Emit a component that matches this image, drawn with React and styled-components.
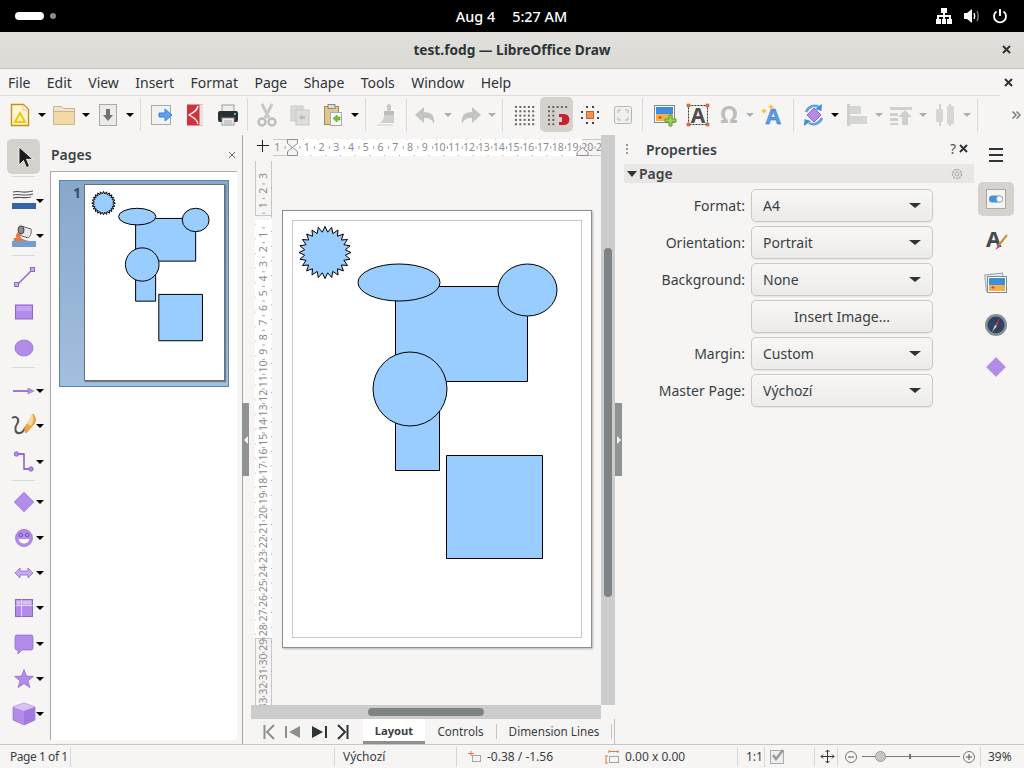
import React from 'react'
import styled, { createGlobalStyle } from 'styled-components'

const GlobalStyle = createGlobalStyle`
  html, body { margin: 0; padding: 0; width: 1024px; height: 768px; overflow: hidden; }
  body { font-family: "Noto Sans", "Open Sans", sans-serif; font-size: 14px; color: #2e3436; background: #f6f5f4; }
  * { box-sizing: border-box; }
`

const Screen = styled.div`
  width: 1024px;
  height: 768px;
  display: flex;
  flex-direction: column;
  background: #f6f5f4;
`

/* gnome top bar */
const TopBar = styled.div`
  height: 32px;
  background: #000;
  color: #fff;
  display: grid;
  grid-template-columns: 1fr auto 1fr;
  align-items: center;
  padding: 0 16px 0 15px;
  font-size: 14.4px;
  font-weight: 500;
`
const Workspaces = styled.div`
  display: flex;
  align-items: center;
  gap: 6px;
`
const Pill = styled.span`
  width: 29px;
  height: 8px;
  border-radius: 4px;
  background: #fff;
`
const Dot = styled.span`
  width: 6px;
  height: 6px;
  border-radius: 50%;
  background: #8a8a8a;
`
const Clock = styled.div`
  display: flex;
  gap: 17px;
`
const Tray = styled.div`
  display: flex;
  justify-content: flex-end;
  align-items: center;
  gap: 12px;
`
const Glyph = styled.svg`
  display: block;
  flex: none;
  overflow: ${p => (p.$clip ? 'hidden' : 'visible')};
  width: ${p => p.$w || 24}px;
  height: ${p => p.$h || p.$w || 24}px;
`

const TitleBar = styled.div`
  height: 37px;
  padding-bottom: 2px;
  background: linear-gradient(#e1dfdb, #dcdad5);
  border-bottom: 1px solid #c4bfb8;
  display: flex;
  align-items: center;
  justify-content: center;
  position: relative;
  font-weight: 700;
  font-size: 13.7px;
  color: #2e3436;
`
const CloseMark = styled.span`
  position: absolute;
  right: ${p => p.$right}px;
  top: ${p => p.$top}px;
  display: block;
`

const MenuBar = styled.div`
  height: 27px;
  margin-right: 24px;
  border-bottom: 1px solid #dedcd9;
  display: flex;
  align-items: center;
  padding-left: 8px;
  position: relative;
  gap: 16.4px;
  font-size: 14px;
  color: #2e3436;
`
const MenuItem = styled.span`
  display: block;
`

const ToolBar = styled.div`
  height: 39px;
  padding: 0 0 2px 3px;
  display: flex;
  align-items: center;
`
const ToolButton = styled.div`
  flex: none;
  width: ${p => p.$w || 33}px;
  height: 35px;
  display: flex;
  align-items: center;
  justify-content: center;
  border-radius: 5px;
  background: ${p => (p.$active ? '#d5d1cc' : 'transparent')};
`
const Caret = styled.span`
  flex: none;
  width: ${p => p.$w || 11}px;
  margin-left: ${p => p.$shift || 0}px;
  display: flex;
  justify-content: center;
  &::before {
    content: '';
    border-left: 4px solid transparent;
    border-right: 4px solid transparent;
    border-top: 4px solid ${p => (p.$dim ? '#b0aeab' : '#000')};
  }
`
const ToolSep = styled.span`
  flex: none;
  width: 1px;
  height: 33px;
  background: #dcdad6;
  margin: 0 ${p => p.$r}px 0 ${p => p.$l}px;
`
const More = styled.span`
  flex: none;
  margin-left: 34px;
`

const Main = styled.div`
  flex: 1;
  min-height: 0;
  display: grid;
  grid-template-columns: 50px 193px 8px 364px 7px 352px 50px;
`

/* left drawing tools */
const Rail = styled.div`
  display: flex;
  flex-direction: column;
  padding: 4px 0 0 7px;
`
const RailButton = styled.div`
  height: 35.3px;
  width: 43px;
  flex: none;
  display: flex;
  align-items: center;
`
const RailIcon = styled.div`
  width: 33px;
  height: 35px;
  flex: none;
  display: flex;
  align-items: center;
  justify-content: center;
  border-radius: 5px;
  background: ${p => (p.$active ? '#d5d1cc' : 'transparent')};
`
const RailSep = styled.span`
  display: block;
  flex: none;
  width: 23px;
  height: 1px;
  background: #dcdad6;
  margin: ${p => p.$t}px 0 ${p => p.$b}px 5px;
`

const PagesPanel = styled.div`
  display: flex;
  flex-direction: column;
  padding-bottom: 4px;
  border-right: 1px solid #a8a6a2;
`
const PanelHead = styled.div`
  height: 37px;
  flex: none;
  display: flex;
  align-items: center;
  justify-content: space-between;
  padding: 3px 1px 0 1px;
  margin-right: 5px;
  border-bottom: 1px solid #b0aeaa;
  font-weight: 600;
  font-size: 14px;
  color: #3d4245;
`
const PagesList = styled.div`
  flex: 1;
  margin-right: 5px;
  background: #fff;
  border-left: 1px solid #a8a6a2;
  border-radius: 0 0 4px 0;
  padding: 8px 0 0 8px;
`
const Thumb = styled.div`
  width: 170px;
  height: 207px;
  background: linear-gradient(#87a7cb, #a3bfde);
  border: 1px solid #5f82a8;
  display: flex;
  padding: 3px 0 0 5px;
  gap: 3px;
`
const ThumbNum = styled.span`
  width: 16px;
  text-align: right;
  font-weight: 700;
  font-size: 14px;
  color: #3c4a58;
  line-height: 17px;
`
const ThumbPage = styled.div`
  width: 141px;
  height: 197px;
  background: #fff;
  outline: 1px solid #6f6f6f;
  outline-offset: -1px;
  box-shadow: 1px 1px 1px #6b7f97;
`

const Splitter = styled.div`
  display: flex;
  flex-direction: column;
  justify-content: center;
  align-items: flex-start;
  margin-left: ${p => (p.$left ? -1 : 0)}px;
`
const SplitHandle = styled.div`
  width: 7px;
  height: 73px;
  background: #909393;
  display: flex;
  align-items: center;
  justify-content: center;
  &::before {
    content: '';
    border-top: 4px solid transparent;
    border-bottom: 4px solid transparent;
    ${p => (p.$left ? 'border-right: 4px solid #f6f5f4;' : 'border-left: 4px solid #f6f5f4;')}
  }
`

/* centre document area */
const Work = styled.div`
  display: grid;
  grid-template-columns: 350px 14px;
  grid-template-rows: 570px 14px 25px;
`
const Canvas = styled.div`
  display: grid;
  grid-template-columns: 22px 328px;
  grid-template-rows: 26px 544px;
  overflow: hidden;
`
const Corner = styled.div`
  padding: 5px 0 0 6px;
`
const HRuler = styled.div`
  padding-top: 4px;
`
const VRuler = styled.div`
  padding-left: 4px;
`
const PageWrap = styled.div`
  padding: 49px 0 0 9px;
`
const Sheet = styled.div`
  width: 310px;
  height: 438px;
  background: #fff;
  outline: 1px solid #8e8e8e;
  outline-offset: -1px;
  box-shadow: 1px 1px 2px #b5b3b0;
`
const DrawingSvg = styled.svg`
  display: block;
  width: 100%;
  height: 100%;
`
const VScroll = styled.div`
  background: #cccccc;
  padding: 113px 3px 0;
`
const VThumb = styled.div`
  width: 8px;
  height: 349px;
  border-radius: 4px;
  background: #808383;
`
const HScroll = styled.div`
  background: #cccccc;
  padding: 3px 0 0 117px;
`
const HThumb = styled.div`
  width: 116px;
  height: 8px;
  border-radius: 4px;
  background: #808383;
`
const Filler = styled.div``
const TabBar = styled.div`
  grid-column: 1 / 3;
  display: flex;
  align-items: stretch;
  padding-left: 12px;
  font-size: 11.7px;
  white-space: nowrap;
  border-right: 1px solid #c4c1bc;
`
const NavGroup = styled.div`
  display: flex;
  align-items: center;
  width: 100px;
  flex: none;
  gap: 10px;
`
const TabButton = styled.div`
  width: ${p => p.$w}px;
  flex: none;
  padding-top: 1px;
  display: flex;
  align-items: center;
  justify-content: center;
  background: ${p => (p.$active ? '#fff' : 'transparent')};
  border-bottom: 3px solid ${p => (p.$active ? '#8e9090' : 'transparent')};
  font-size: ${p => (p.$active ? 11.2 : 11.7)}px;
  font-weight: ${p => (p.$active ? 700 : 400)};
  color: #3a3f42;
`
const TabSep = styled.span`
  width: 1px;
  height: 15px;
  flex: none;
  align-self: center;
  background: #c9c6c2;
`

/* right properties deck */
const Props = styled.div`
  display: flex;
  flex-direction: column;
  padding-left: 2px;
`
const PropsHead = styled.div`
  height: 29px;
  flex: none;
  display: flex;
  align-items: center;
  padding-left: 22px;
  position: relative;
  font-weight: 600;
  font-size: 14px;
  color: #3d4245;
`
const Grip = styled.span`
  position: absolute;
  left: 2px;
  top: 9px;
  height: 12px;
  width: 2px;
  background: repeating-linear-gradient(#9a9a9a 0 2px, transparent 2px 4px);
`
const HeadTools = styled.span`
  position: absolute;
  right: 6px;
  top: 4px;
  display: flex;
  align-items: center;
  gap: 3px;
  font-weight: 400;
  color: #555;
`
const SectionHead = styled.div`
  height: 19px;
  flex: none;
  background: #e8e7e5;
  display: flex;
  align-items: center;
  padding: 0 11px 0 3px;
  gap: 2px;
  font-weight: 600;
  font-size: 14px;
  color: #3d4245;
  &::before {
    content: '';
    border-left: 5.5px solid transparent;
    border-right: 5.5px solid transparent;
    border-top: 6px solid #2e3436;
  }
`
const SectionName = styled.span`
  flex: 1;
`
const Form = styled.div`
  padding-top: 6px;
  display: flex;
  flex-direction: column;
  gap: 4px;
`
const Row = styled.div`
  display: flex;
  align-items: center;
  gap: 6px;
`
const Label = styled.span`
  width: 121px;
  text-align: right;
  font-size: 14px;
  color: #3a3f42;
`
const Combo = styled.div`
  width: 182px;
  height: 33px;
  border: 1px solid #cdc7c2;
  border-radius: 5px;
  background: linear-gradient(#f8f7f6, #edebe9);
  box-shadow: 0 1px 1px rgba(0, 0, 0, 0.07);
  display: flex;
  align-items: center;
  justify-content: ${p => (p.$center ? 'center' : 'space-between')};
  padding: 0 11px;
  font-size: 14px;
  color: #3a3f42;
`
const ComboArrow = styled.span`
  border-left: 6px solid transparent;
  border-right: 6px solid transparent;
  border-top: 5px solid #2e3436;
`

const Deck = styled.div`
  display: flex;
  flex-direction: column;
  align-items: flex-start;
  padding: 8px 0 0 4px;
`
const Burger = styled.div`
  width: 36px;
  height: 24px;
  margin-bottom: 15px;
  display: flex;
  flex-direction: column;
  align-items: center;
  justify-content: center;
  gap: 4px;
  & > span {
    display: block;
    width: 14px;
    height: 2px;
    background: #2e3436;
  }
`
const DeckTab = styled.div`
  width: 36px;
  height: 34px;
  margin-bottom: 8px;
  border-radius: 5px;
  display: flex;
  align-items: center;
  justify-content: center;
  background: ${p => (p.$active ? '#d5d1cc' : 'transparent')};
`

/* status bar */
const StatusBar = styled.div`
  height: 24px;
  flex: none;
  border-top: 1px solid #c8c5c0;
  display: flex;
  align-items: center;
  font-size: 12px;
  color: #3a3f42;
  white-space: nowrap;
`
const Cell = styled.div`
  flex: none;
  width: ${p => p.$w}px;
  height: 20px;
  padding-left: ${p => p.$pad || 0}px;
  display: flex;
  align-items: center;
  gap: ${p => p.$gap || 0}px;
  letter-spacing: ${p => (p.$tight ? '-0.45px' : 'normal')};
  border-right: ${p => (p.$plain ? 'none' : '1px solid #d9d7d3')};
`
const ZoomTrack = styled.div`
  width: 98px;
  height: 1px;
  background: #777;
  position: relative;
  margin: 0 3px 0 5px;
`
const ZoomKnob = styled.span`
  position: absolute;
  left: 13px;
  top: -5px;
  width: 11px;
  height: 11px;
  border-radius: 50%;
  background: #c9c7c3;
  border: 1px solid #999;
`
const ZoomTick = styled.span`
  position: absolute;
  left: 47px;
  top: -2px;
  width: 2px;
  height: 5px;
  background: #777;
`

const P = '#b38be8'
const PD = '#8f63d2'

const star = (cx, cy, ro, ri, n) => {
  const pts = []
  for (let i = 0; i < n * 2; i++) {
    const r = i % 2 ? ri : ro
    const a = (Math.PI * i) / n - Math.PI / 2
    pts.push(`${(cx + r * Math.cos(a)).toFixed(1)},${(cy + r * Math.sin(a)).toFixed(1)}`)
  }
  return pts.join(' ')
}

function Drawing({ margin, stroke }) {
  const shape = { fill: '#99ccff', stroke: '#000', strokeWidth: stroke, vectorEffect: 'non-scaling-stroke' }
  return (
    <DrawingSvg viewBox="282 210 310 438" preserveAspectRatio="none">
      {margin && <rect x="292.5" y="220.5" width="289" height="417" fill="none" stroke="#c8c8c8" />}
      <polygon points={star(325, 252.5, 26, 20.5, 24)} {...shape} />
      <rect x="395.5" y="286.5" width="132" height="95" {...shape} />
      <ellipse cx="399" cy="282.5" rx="41" ry="18.5" {...shape} />
      <ellipse cx="527.5" cy="290" rx="29.5" ry="26" {...shape} />
      <rect x="395.5" y="400.5" width="44" height="70" {...shape} />
      <circle cx="410" cy="389" r="37" {...shape} />
      <rect x="446.5" y="455.5" width="96" height="103" {...shape} />
    </DrawingSvg>
  )
}

function HorizontalRuler() {
  const zero = 292 - 273
  const cm = 14.76
  const items = []
  for (let i = -1; i <= 21; i++) {
    const x = zero + i * cm
    if (i !== 0) {
      items.push(<text key={i} x={x} y="12" fontSize="10.5" textAnchor="middle" fill="#8c8c8c">{Math.abs(i)}</text>)
    }
    items.push(<rect key={`t${i}`} x={x + cm / 2} y="7" width="1" height="3" fill="#aaa" />)
    items.push(<rect key={`q${i}`} x={x + cm / 4} y="16" width="1" height="1" fill="#aaa" />)
    items.push(<rect key={`r${i}`} x={x + (3 * cm) / 4} y="0" width="1" height="1" fill="#ccc" />)
  }
  return (
    <Glyph $clip $w={328} $h={17} viewBox="0 0 328 17" fontFamily="Noto Sans, sans-serif">
      <rect x={zero} width="290" height="17" fill="#fff" />
      <path d="M0 .5H19M0 16.5H19M309 .5H328M309 16.5H328" stroke="#c8c8c8" />
      {items}
      <path d="M14.5 .5h10v4l-5 4-5-4zM14.5 16.5h10v-4l-5-4-5 4z" fill="#f6f5f4" stroke="#8e8e8e" />
      <path d="M304 16.5h11v-3l-5.5-5-5.5 5z" fill="#f6f5f4" stroke="#8e8e8e" />
    </Glyph>
  )
}

function VerticalRuler() {
  const zero = 220 - 161
  const cm = 14.65
  const items = []
  for (let i = -3; i <= 33; i++) {
    const y = zero + i * cm
    if (i !== 0) {
      items.push(
        <text key={i} x="8.5" y={y} fontSize="10.5" textAnchor="middle" fill="#8c8c8c" transform={`rotate(-90 8.5 ${y}) translate(0 3.5)`}>
          {Math.abs(i)}
        </text>
      )
    }
    items.push(<rect key={`t${i}`} x="7" y={y + cm / 2} width="3" height="1" fill="#aaa" />)
    items.push(<rect key={`q${i}`} x="0" y={y + cm / 4} width="1" height="1" fill="#ccc" />)
    items.push(<rect key={`r${i}`} x="16" y={y + (3 * cm) / 4} width="1" height="1" fill="#aaa" />)
  }
  return (
    <Glyph $clip $w={17} $h={544} viewBox="0 0 17 544" fontFamily="Noto Sans, sans-serif">
      <rect y={zero} width="17" height="418" fill="#fff" />
      <path d="M.5 0V54M16.5 0V54M.5 477V544M16.5 477V544M0 54.5H17M0 477.5H17" stroke="#c8c8c8" fill="none" />
      {items}
    </Glyph>
  )
}

const Gray = '#c4c4c2'

const Ic = {
  New: () => (
    <Glyph viewBox="0 0 24 24">
      <path d="M3.5 1.5h12l5 5v16h-17z" fill="#fff6d0" stroke="#c98f1e" strokeWidth="1.4" />
      <path d="M15 2v5h5" fill="#fff" stroke="#e8c878" />
      <path d="M12 10l5 9H7z" fill="none" stroke="#f5c211" strokeWidth="2" />
    </Glyph>
  ),
  Folder: () => (
    <Glyph viewBox="0 0 24 24">
      <path d="M1.5 3.5h8l2 2h11v16h-21z" fill="#efe3cb" stroke="#c9b48c" />
      <path d="M1.5 8.5h21v13h-21z" fill="#f1d9a8" stroke="#c9b48c" />
    </Glyph>
  ),
  Save: () => (
    <Glyph viewBox="0 0 24 24">
      <rect x="3.5" y="1.5" width="17" height="21" fill="#ecebe9" stroke="#a9a9a7" />
      <path d="M10 6h4v6h3l-5 6-5-6h3z" fill="#6f7374" />
    </Glyph>
  ),
  Export: () => (
    <Glyph viewBox="0 0 24 24">
      <rect x="1.5" y="2.5" width="19" height="19" fill="#f2f2f1" stroke="#a9a9a7" />
      <path d="M9 10h6V6l7 6-7 6v-4H9z" fill="#62a0ea" stroke="#3584e4" />
    </Glyph>
  ),
  Pdf: () => (
    <Glyph viewBox="0 0 24 24">
      <rect x="4" y="1.5" width="16" height="21" fill="#d0343a" />
      <path d="M15 3c-1 5-5 7-9 9 4 2 8 4 9 9" fill="none" stroke="#fff" strokeWidth="1.3" />
      <rect x="16.5" y="1.5" width="3.5" height="21" fill="#e7e3e0" />
    </Glyph>
  ),
  Print: () => (
    <Glyph viewBox="0 0 24 24">
      <rect x="6" y="2" width="12" height="7" fill="#eeeeec" stroke="#999" />
      <rect x="2" y="8" width="20" height="11" rx="2" fill="#2b2f31" />
      <rect x="18" y="10" width="2" height="2" fill="#33c7de" />
      <rect x="6" y="15" width="12" height="7" fill="#eeeeec" stroke="#999" />
      <path d="M8 18h8M8 20h8" stroke="#aaa" />
    </Glyph>
  ),
  Cut: () => (
    <Glyph viewBox="0 0 24 24">
      <path d="M7 1l7 14M17 1l-7 14" stroke="#c8c8c6" strokeWidth="3" />
      <circle cx="7" cy="19" r="3.5" fill="none" stroke="#bdbdbb" strokeWidth="2.4" />
      <circle cx="17" cy="19" r="3.5" fill="none" stroke="#bdbdbb" strokeWidth="2.4" />
    </Glyph>
  ),
  Copy: () => (
    <Glyph viewBox="0 0 24 24">
      <rect x="3" y="3" width="12" height="15" fill="#d9d9d7" stroke="#ccc" />
      <rect x="8" y="7" width="13" height="15" fill="#dededc" stroke="#c8c8c6" />
      <path d="M11 14l3-3v2h3v3h-3v2z" fill="#bcbcba" />
    </Glyph>
  ),
  Paste: () => (
    <Glyph viewBox="0 0 24 24">
      <rect x="3.5" y="3.5" width="14" height="18" fill="#e0c68f" stroke="#a88a50" />
      <rect x="7" y="1.5" width="7" height="4" fill="#ddd" stroke="#888" />
      <rect x="9.5" y="9.5" width="11" height="13" fill="#f7f7f6" stroke="#aaa" />
      <path d="M16 12l-4 3.5 4 3.5v-2h3v-3h-3z" fill="#73c04b" stroke="#4e9a2a" strokeWidth=".6" />
    </Glyph>
  ),
  Brush: () => (
    <Glyph viewBox="0 0 24 24">
      <rect x="12" y="1" width="4" height="8" rx="2" fill="#c8c8c6" />
      <rect x="9" y="8" width="10" height="4" fill="#bdbdbb" />
      <path d="M9 12h10v8H4c3-1 5-3 5-8z" fill="#cfcfcd" />
      <path d="M2 22h16" stroke="#e2e2e0" strokeWidth="2" />
    </Glyph>
  ),
  Undo: () => (
    <Glyph viewBox="0 0 24 24">
      <path d="M10 4L1 12l9 8v-5c5 0 8 1 10 6 1-8-2-12-10-12z" fill={Gray} />
    </Glyph>
  ),
  Redo: () => (
    <Glyph viewBox="0 0 24 24">
      <path d="M14 4l9 8-9 8v-5c-5 0-8 1-10 6-1-8 2-12 10-12z" fill={Gray} />
    </Glyph>
  ),
  Grid: ({ magnet }) => {
    const dots = []
    for (let x = 0; x < 5; x++) {
      for (let y = 0; y < 5; y++) {
        if (!magnet || x < 2 || y < 1) dots.push(<rect key={`${x}${y}`} x={3 + x * 4.3} y={3 + y * 4.3} width="2" height="2" fill="#666" />)
      }
    }
    return (
      <Glyph viewBox="0 0 24 24">
        {dots}
        {magnet && <path d="M14 11h5a5.5 5.5 0 010 11h-5v-3h3v-5h-3z" fill="#c8202c" />}
      </Glyph>
    )
  },
  Help: () => (
    <Glyph viewBox="0 0 24 24">
      <path d="M8 4h2M14 4h2M8 20h2M14 20h2M4 8v2M4 14v2M20 8v2M20 14v2" stroke="#444" strokeWidth="2" />
      <rect x="8.5" y="8.5" width="7" height="7" fill="#f5924e" stroke="#c9622a" />
    </Glyph>
  ),
  Full: () => (
    <Glyph viewBox="0 0 24 24">
      <rect x="3.5" y="3.5" width="17" height="17" rx="2" fill="#f0f0ee" stroke="#b5b5b3" />
      <path d="M7 10V7h3M14 7h3v3M17 14v3h-3M10 17H7v-3" fill="none" stroke="#b5b5b3" />
    </Glyph>
  ),
  Image: () => (
    <Glyph viewBox="0 0 24 24">
      <rect x="1.5" y="2.5" width="20" height="17" fill="#fff" stroke="#7a8a96" />
      <rect x="3" y="4" width="17" height="7" fill="#3f8fd8" />
      <rect x="3" y="11" width="17" height="7" fill="#f5b043" />
      <path d="M7 13v3M5.5 14.5h3" stroke="#d33" />
      <path d="M16 12h3v4h4v3h-4v4h-3v-4h-4v-3h4z" fill="#9bd25f" stroke="#5f9e2e" />
    </Glyph>
  ),
  TextBox: () => (
    <Glyph viewBox="0 0 24 24" fontFamily="Noto Sans, sans-serif">
      <rect x="2.5" y="2.5" width="19" height="19" fill="none" stroke="#333" strokeDasharray="2 1" />
      <text x="12" y="19.5" fontSize="21" fontWeight="700" textAnchor="middle" fill="#4d4d4d">A</text>
      <path d="M1 1h3v3H1zM20 1h3v3h-3zM1 20h3v3H1zM20 20h3v3h-3z" fill="#e9773e" stroke="#a8532a" strokeWidth=".5" />
    </Glyph>
  ),
  Omega: () => (
    <Glyph viewBox="0 0 24 24" fontFamily="Noto Sans, sans-serif">
      <text x="12" y="20" fontSize="23" fontWeight="700" textAnchor="middle" fill="#bcbcba">Ω</text>
    </Glyph>
  ),
  Fontwork: () => (
    <Glyph viewBox="0 0 24 24" fontFamily="Noto Sans, sans-serif">
      <text x="13" y="21" fontSize="22" fontWeight="700" textAnchor="middle" fill="#5b9be0" stroke="#2f6fbd" strokeWidth=".4">A</text>
      <path d="M4 5l1 2 2 1-2 1-1 2-1-2-2-1 2-1zM11 1l1 2 2 1-2 1-1 2-1-2-2-1 2-1z" fill="#f0c43c" />
    </Glyph>
  ),
  Rotate: () => (
    <Glyph viewBox="0 0 24 24">
      <path d="M13 5l7 7-7 7-7-7z" fill={P} stroke={PD} />
      <path d="M5 9c2-5 8-8 13-5" fill="none" stroke="#62a0ea" strokeWidth="2.6" />
      <path d="M21 1l-.5 7-6.5-2z" fill="#3f8fe0" />
      <path d="M21 15c-2 5-8 8-13 5" fill="none" stroke="#62a0ea" strokeWidth="2.6" />
      <path d="M3 23l.5-7 6.5 2z" fill="#3f8fe0" />
    </Glyph>
  ),
  Align: () => (
    <Glyph viewBox="0 0 24 24">
      <rect x="2" y="1" width="3" height="22" fill="#cfcfcd" />
      <rect x="5" y="3" width="11" height="8" fill="#d6d6d4" />
      <rect x="5" y="13" width="17" height="8" fill="#d6d6d4" />
    </Glyph>
  ),
  Arrange: () => (
    <Glyph viewBox="0 0 24 24">
      <path d="M1 4h22v3H1zM1 10h8v3H1zM1 15h8v3H1zM1 20h8v2H1z" fill="#cfcfcd" />
      <path d="M16 7l7 7h-4v8h-6v-8H9z" fill="#cfcfcd" />
    </Glyph>
  ),
  Distribute: () => (
    <Glyph viewBox="0 0 24 24">
      <path d="M6 1h2v22H6zM16 1h2v22h-2z" fill="#d0d0ce" />
      <rect x="3" y="6" width="7" height="13" rx="1" fill="#d6d6d4" />
      <rect x="14" y="3" width="7" height="18" rx="1" fill="#d6d6d4" />
    </Glyph>
  ),
  Pointer: () => (
    <Glyph viewBox="0 0 24 24">
      <path d="M7 2v18l4.5-4.5 3 7 3-1.2-3-7h6.3z" fill="#1c1c1c" stroke="#fff" strokeWidth=".8" />
    </Glyph>
  ),
  LineColor: () => (
    <Glyph viewBox="0 0 24 24">
      <path d="M1 3c6-2 9 2 20-1M1 6c6-2 10 2 20-1M1 9c6-2 10 1 18-1" fill="none" stroke="#555" strokeWidth="1.1" />
      <rect y="14" width="24" height="6" fill="#2f66ab" />
    </Glyph>
  ),
  FillColor: () => (
    <Glyph viewBox="0 0 24 24">
      <path d="M9 2l10 3c1 4-1 8-3 9l-9-3z" fill="#e8e8e6" stroke="#666" />
      <ellipse cx="9" cy="6" rx="3" ry="4" fill="#8c8c8c" stroke="#444" />
      <path d="M6 8c-2 2-3 5-1 6H2l-.5 3H17c-4-1-8-2-9-5z" fill="#e9773e" />
      <rect y="17" width="24" height="6" fill="#729fcf" />
    </Glyph>
  ),
  Line: () => (
    <Glyph viewBox="0 0 24 24">
      <path d="M5 20L20 5" stroke={PD} strokeWidth="1.4" />
      <rect x="2.5" y="17.5" width="4" height="4" fill="#c9aaf0" stroke={PD} />
      <rect x="18.5" y="2.5" width="4" height="4" fill="#c9aaf0" stroke={PD} />
    </Glyph>
  ),
  Rect: () => (
    <Glyph viewBox="0 0 24 24">
      <rect x="3.5" y="5" width="17" height="14" fill={P} stroke={PD} />
      <rect x="4.5" y="6" width="15" height="5" fill="#c5a5ee" />
    </Glyph>
  ),
  Ellipse: () => (
    <Glyph viewBox="0 0 24 24">
      <ellipse cx="12" cy="12" rx="9" ry="8" fill={P} stroke={PD} strokeWidth=".7" />
    </Glyph>
  ),
  Arrow: () => (
    <Glyph viewBox="0 0 24 24">
      <path d="M1 12h18" stroke="#7a3fc4" strokeWidth="1.4" />
      <path d="M16 9l6 3-6 3z" fill={P} stroke={PD} strokeWidth=".5" />
    </Glyph>
  ),
  Curve: () => (
    <Glyph viewBox="0 0 24 24">
      <path d="M0 4c5-3 8 2 5 6s-2 10 3 9 3-5 6-5" fill="none" stroke="#555" strokeWidth="2" />
      <path d="M21 0c3 3 3 7 1 10l-8 9-2-4z" fill="#f3a73f" stroke="#b87a20" strokeWidth=".6" />
      <path d="M20 1c-2 2-4 6-5 9l4 2c2-3 3-7 2-11z" fill="#f8d9a0" />
    </Glyph>
  ),
  Connector: () => (
    <Glyph viewBox="0 0 24 24">
      <path d="M6 4h6v15h8" fill="none" stroke="#7a3fc4" strokeWidth="1.3" />
      <circle cx="4.5" cy="4" r="2.2" fill={P} stroke={PD} />
      <circle cx="19" cy="19" r="2.2" fill={P} stroke={PD} />
    </Glyph>
  ),
  Diamond: () => (
    <Glyph viewBox="0 0 24 24">
      <path d="M12 2l10 10-10 10L2 12z" fill={P} stroke="#a57ae0" strokeWidth=".6" />
    </Glyph>
  ),
  Smiley: () => (
    <Glyph viewBox="0 0 24 24">
      <circle cx="12" cy="12" r="8.5" fill={P} stroke={PD} strokeWidth=".7" />
      <circle cx="8.8" cy="9" r="1.8" fill="none" stroke="#7a4fc0" />
      <circle cx="15.2" cy="9" r="1.8" fill="none" stroke="#7a4fc0" />
      <path d="M6.5 13h11c-1 3-3 4.5-5.5 4.5S7.5 16 6.5 13z" fill="#fff" />
    </Glyph>
  ),
  Double: () => (
    <Glyph viewBox="0 0 24 24">
      <path d="M3 12l5-5v3h8V7l5 5-5 5v-3H8v3z" fill="#c9aaf0" stroke={PD} strokeWidth=".8" />
    </Glyph>
  ),
  Flow: () => (
    <Glyph viewBox="0 0 24 24">
      <rect x="3.5" y="3.5" width="17" height="17" fill={P} stroke={PD} />
      <path d="M3.5 9.5h17M9.5 3.5v17" stroke="#e6d8fa" />
      <rect x="4.5" y="4.5" width="4" height="4" fill="#d7c2f4" />
      <rect x="10.5" y="4.5" width="9" height="4" fill="#d7c2f4" />
    </Glyph>
  ),
  Callout: () => (
    <Glyph viewBox="0 0 24 24">
      <path d="M5 3h14a2 2 0 012 2v11a2 2 0 01-2 2h-9l-4 4v-4H5a2 2 0 01-2-2V5a2 2 0 012-2z" fill={P} stroke={PD} strokeWidth=".7" />
    </Glyph>
  ),
  Star: () => (
    <Glyph viewBox="0 0 24 24">
      <polygon points={star(12, 12.5, 10, 4.2, 5)} fill={P} stroke={PD} strokeWidth=".7" />
    </Glyph>
  ),
  Cube: () => (
    <Glyph viewBox="0 0 24 24">
      <path d="M12 1l11 4v13l-11 5L1 18V5z" fill={P} stroke={PD} strokeWidth=".6" />
      <path d="M1 5l11 4 11-4-11-4z" fill="#d7c2f4" />
      <path d="M12 9v14l11-5V5z" fill="#a478e2" />
    </Glyph>
  ),
  Toggle: () => (
    <Glyph viewBox="0 0 24 24">
      <rect x="2.5" y="2.5" width="19" height="19" fill="#f4f4f3" stroke="#a9a9a7" />
      <rect x="5" y="8.5" width="14" height="7" rx="3.5" fill="#4a90e2" />
      <circle cx="15.5" cy="12" r="3" fill="#fff" stroke="#999" strokeWidth=".5" />
    </Glyph>
  ),
  Styles: () => (
    <Glyph viewBox="0 0 24 24" fontFamily="Noto Sans, sans-serif">
      <text x="9.5" y="18" fontSize="22" fontWeight="700" textAnchor="middle" fill="#45494b">A</text>
      <path d="M23 6l-9 11" stroke="#c98f3a" strokeWidth="2" />
      <path d="M15 15l-4 6 5-3z" fill="#c13bb0" />
    </Glyph>
  ),
  Gallery: () => (
    <Glyph viewBox="0 0 24 24">
      <rect x="1.5" y="3" width="18" height="16" fill="#e6eaf0" stroke="#9aa6b3" transform="rotate(-6 11 11)" />
      <rect x="3.5" y="5.5" width="19" height="16" fill="#fff" stroke="#7a8a96" />
      <rect x="5" y="7" width="16" height="7" fill="#3f8fd8" />
      <rect x="5" y="14" width="16" height="6" fill="#f5b043" />
      <path d="M9 15v3M7.5 16.5h3" stroke="#d33" />
    </Glyph>
  ),
  Compass: () => (
    <Glyph viewBox="0 0 24 24">
      <circle cx="12" cy="12" r="11" fill="#8a8f96" />
      <circle cx="12" cy="12" r="8.5" fill="#2d4465" />
      <path d="M16 5l-3 8-2-1z" fill="#e5363a" />
      <path d="M8 19l3-7 2 1z" fill="#d9d9d9" />
    </Glyph>
  ),
  DeckDiamond: () => (
    <Glyph viewBox="0 0 24 24">
      <path d="M12 2.5l9.5 9.5-9.5 9.5L2.5 12z" fill={P} stroke="#a57ae0" strokeWidth=".5" />
    </Glyph>
  ),
}

const Close = ({ size = 9, color = '#2e3436', width = 2 }) => (
  <Glyph $w={size} viewBox="0 0 9 9">
    <path d="M1 1l7 7M8 1L1 8" stroke={color} strokeWidth={width} />
  </Glyph>
)

const Nav = {
  First: ({ c }) => (
    <Glyph $w={12} $h={16} viewBox="0 0 12 16">
      <path d="M1.5 1v14" stroke={c} strokeWidth="2" />
      <path d="M11 1L4 8l7 7" fill="none" stroke={c} strokeWidth="2" />
    </Glyph>
  ),
  Prev: ({ c }) => (
    <Glyph $w={16} $h={14} viewBox="0 0 16 14">
      <path d="M1 1v12" stroke={c} strokeWidth="2" />
      <path d="M15 1v12L4 7z" fill={c} />
    </Glyph>
  ),
  Next: ({ c }) => (
    <Glyph $w={16} $h={14} viewBox="0 0 16 14">
      <path d="M15 1v12" stroke={c} strokeWidth="2" />
      <path d="M1 1v12l11-6z" fill={c} />
    </Glyph>
  ),
  Last: ({ c }) => (
    <Glyph $w={12} $h={16} viewBox="0 0 12 16">
      <path d="M10.5 1v14" stroke={c} strokeWidth="2" />
      <path d="M1 1l7 7-7 7" fill="none" stroke={c} strokeWidth="2" />
    </Glyph>
  ),
}

const menus = ['File', 'Edit', 'View', 'Insert', 'Format', 'Page', 'Shape', 'Tools', 'Window', 'Help']

const railGroups = [
  [['Pointer', false, true]],
  [['LineColor', true], ['FillColor', true]],
  [['Line'], ['Rect'], ['Ellipse']],
  [['Arrow', true], ['Curve', true], ['Connector', true]],
  [['Diamond', true], ['Smiley', true], ['Double', true], ['Flow', true], ['Callout', true], ['Star', true], ['Cube', true]],
]
const railSeps = [[2, 6], [1, 3.5], [2, 5], [1, 3.5]]

const rows = [
  ['Format:', 'A4'],
  ['Orientation:', 'Portrait'],
  ['Background:', 'None'],
  ['', 'Insert Image...', true],
  ['Margin:', 'Custom'],
  ['Master Page:', 'Výchozí'],
]

function Tool({ icon, caret, dim, width }) {
  const Comp = Ic[icon]
  return (
    <>
      <ToolButton $w={width}><Comp /></ToolButton>
      {caret && <Caret $dim={dim} />}
    </>
  )
}

export default function App() {
  return (
    <Screen>
      <GlobalStyle />
      <TopBar>
        <Workspaces><Pill /><Dot /></Workspaces>
        <Clock><span>Aug 4</span><span>5:27 AM</span></Clock>
        <Tray>
          <Glyph $w={16} viewBox="0 0 16 16">
            <path d="M5 0h6v5H9v2h6v4h1v5h-5v-5h2V9H9v2h1v5H6v-5h1V9H3v2h2v5H0v-5h1V7h6V5H5z" fill="#fff" />
          </Glyph>
          <Glyph $w={16} viewBox="0 0 16 16">
            <path d="M0 5h3l5-4v14l-5-4H0z" fill="#fff" />
            <path d="M10 5c1 2 1 4 0 6" fill="none" stroke="#fff" strokeWidth="1.5" />
            <path d="M13 3c1.5 3 1.5 7 0 10" fill="none" stroke="#777" strokeWidth="1.5" />
          </Glyph>
          <Glyph $w={16} viewBox="0 0 16 16">
            <path d="M8 1v7" stroke="#fff" strokeWidth="2" />
            <path d="M4.5 3.5a6 6 0 107 0" fill="none" stroke="#fff" strokeWidth="1.8" />
          </Glyph>
        </Tray>
      </TopBar>

      <TitleBar>
        <span>test.fodg — LibreOffice Draw</span>
        <CloseMark $right={13} $top={13}><Close /></CloseMark>
      </TitleBar>

      <MenuBar>
        {menus.map(m => <MenuItem key={m}>{m}</MenuItem>)}
        <CloseMark $right={-13} $top={9}><Close /></CloseMark>
      </MenuBar>

      <ToolBar>
        <Tool icon="New" caret />
        <Tool icon="Folder" caret />
        <Tool icon="Save" caret />
        <ToolSep $l={5} $r={4} />
        <Tool icon="Export" />
        <Tool icon="Pdf" />
        <Tool icon="Print" />
        <ToolSep $l={3} $r={2} />
        <Tool icon="Cut" />
        <Tool icon="Copy" />
        <Tool icon="Paste" caret />
        <ToolSep $l={5} $r={4} />
        <Tool icon="Brush" />
        <ToolSep $l={3} $r={2} />
        <Tool icon="Undo" caret dim />
        <Tool icon="Redo" caret dim />
        <ToolSep $l={5} $r={4} />
        <Tool icon="Grid" />
        <ToolButton $active><Ic.Grid magnet /></ToolButton>
        <Tool icon="Help" />
        <Tool icon="Full" />
        <ToolSep $l={3} $r={5} />
        <Tool icon="Image" />
        <Tool icon="TextBox" />
        <Tool icon="Omega" width={30} caret dim />
        <Tool icon="Fontwork" />
        <ToolSep $l={5} $r={2} />
        <Tool icon="Rotate" caret />
        <Tool icon="Align" caret dim />
        <Tool icon="Arrange" caret dim />
        <Tool icon="Distribute" caret dim />
        <ToolSep $l={5} $r={0} />
        <More>
          <Glyph $w={9} $h={8} viewBox="0 0 9 8">
            <path d="M.5.5L4 4 .5 7.5M4.5.5L8 4 4.5 7.5" fill="none" stroke="#7d8080" strokeWidth="1.5" />
          </Glyph>
        </More>
      </ToolBar>

      <Main>
        <Rail>
          {railGroups.map((group, g) => (
            <React.Fragment key={g}>
              {group.map(([name, caret, active]) => {
                const Comp = Ic[name]
                return (
                  <RailButton key={name}>
                    <RailIcon $active={active}><Comp /></RailIcon>
                    {caret && <Caret $w={8} $shift={-4} />}
                  </RailButton>
                )
              })}
              {railSeps[g] && <RailSep $t={railSeps[g][0]} $b={railSeps[g][1]} />}
            </React.Fragment>
          ))}
        </Rail>

        <PagesPanel>
          <PanelHead>Pages<Close size={8} color="#666" width={1.1} /></PanelHead>
          <PagesList>
            <Thumb>
              <ThumbNum>1</ThumbNum>
              <ThumbPage><Drawing stroke={1} /></ThumbPage>
            </Thumb>
          </PagesList>
        </PagesPanel>

        <Splitter $left><SplitHandle $left /></Splitter>

        <Work>
          <Canvas>
            <Corner>
              <Glyph $w={12} viewBox="0 0 12 12"><path d="M0 5.5h12M5.5 0v12" stroke="#222" /></Glyph>
            </Corner>
            <HRuler><HorizontalRuler /></HRuler>
            <VRuler><VerticalRuler /></VRuler>
            <PageWrap>
              <Sheet><Drawing margin stroke={1} /></Sheet>
            </PageWrap>
          </Canvas>
          <VScroll><VThumb /></VScroll>
          <HScroll><HThumb /></HScroll>
          <Filler />
          <TabBar>
            <NavGroup>
              <Nav.First c="#8e9090" />
              <Nav.Prev c="#8e9090" />
              <Nav.Next c="#2e3436" />
              <Nav.Last c="#2e3436" />
            </NavGroup>
            <TabButton $active $w={62}>Layout</TabButton>
            <TabButton $w={71}>Controls</TabButton>
            <TabSep />
            <TabButton $w={114}>Dimension Lines</TabButton>
            <TabSep />
          </TabBar>
        </Work>

        <Splitter><SplitHandle /></Splitter>

        <Props>
          <PropsHead>
            <Grip />
            Properties
            <HeadTools>? <Close size={9} /></HeadTools>
          </PropsHead>
          <SectionHead>
            <SectionName>Page</SectionName>
            <Glyph $w={12} viewBox="0 0 12 12">
              <circle cx="6" cy="6" r="4.5" fill="none" stroke="#aaa" strokeWidth="1.5" strokeDasharray="2 1" />
              <circle cx="6" cy="6" r="2" fill="none" stroke="#aaa" />
            </Glyph>
          </SectionHead>
          <Form>
            {rows.map(([label, value, button]) => (
              <Row key={value}>
                <Label>{label}</Label>
                <Combo $center={button}>
                  <span>{value}</span>
                  {!button && <ComboArrow />}
                </Combo>
              </Row>
            ))}
          </Form>
        </Props>

        <Deck>
          <Burger><span /><span /><span /></Burger>
          <DeckTab $active><Ic.Toggle /></DeckTab>
          <DeckTab><Ic.Styles /></DeckTab>
          <DeckTab><Ic.Gallery /></DeckTab>
          <DeckTab><Ic.Compass /></DeckTab>
          <DeckTab><Ic.DeckDiamond /></DeckTab>
        </Deck>
      </Main>

      <StatusBar>
        <Cell $w={71} $pad={10} $tight>Page 1 of 1</Cell>
        <Cell $w={264} />
        <Cell $w={122} $pad={8}>Výchozí</Cell>
        <Cell $w={148} $pad={10} $gap={6} $plain>
          <Glyph $w={14} viewBox="0 0 14 14">
            <path d="M1 3.5h6M4 1v5" stroke="#e9773e" />
            <rect x="5.5" y="5.5" width="8" height="6" fill="none" stroke="#555" strokeDasharray="1 1" />
          </Glyph>
          -0.38 / -1.56
        </Cell>
        <Cell $w={133} $gap={6}>
          <Glyph $w={14} viewBox="0 0 14 14">
            <path d="M4 1.5h9M4 0v3M13 0v3M1 6v7M0 6h3M0 13h3" stroke="#e9773e" />
            <rect x="4.5" y="6.5" width="9" height="6" fill="none" stroke="#555" strokeDasharray="1 1" />
          </Glyph>
          0.00 x 0.00
        </Cell>
        <Cell $w={27} $pad={8}>1:1</Cell>
        <Cell $w={50} $pad={5}>
          <Glyph $w={15} viewBox="0 0 15 15">
            <rect x=".5" y="1.5" width="13" height="13" fill="#eee" stroke="#aaa" />
            <path d="M3 6l3 4 7-9" fill="none" stroke="#999" strokeWidth="2.5" />
          </Glyph>
        </Cell>
        <Cell $w={23} $pad={6}>
          <Glyph $w={13} viewBox="0 0 13 13">
            <path d="M6.5 0v13M0 6.5h13M4.500 2l2-2 2 2M4.500 11l2 2 2-2M2 4.500l-2 2 2 2M11 4.500l2 2-2 2" fill="none" stroke="#333" />
          </Glyph>
        </Cell>
        <Cell $w={143} $pad={7}>
          <Glyph $w={12} viewBox="0 0 12 12">
            <circle cx="6" cy="6" r="5.5" fill="none" stroke="#777" />
            <path d="M3 6h6" stroke="#555" />
          </Glyph>
          <ZoomTrack><ZoomKnob /><ZoomTick /></ZoomTrack>
          <Glyph $w={12} viewBox="0 0 12 12">
            <circle cx="6" cy="6" r="5.5" fill="none" stroke="#777" />
            <path d="M3 6h6M6 3v6" stroke="#555" />
          </Glyph>
        </Cell>
        <Cell $w={43} $pad={7} $plain>39%</Cell>
      </StatusBar>
    </Screen>
  )
}
